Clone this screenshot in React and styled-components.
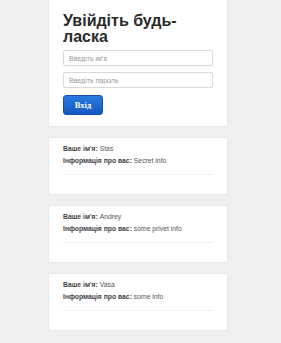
import React from 'react';
import styled, { createGlobalStyle } from 'styled-components';

const Global = createGlobalStyle`
  html, body {
    margin: 0;
    padding: 0;
    background: #efefef;
    font-family: "Liberation Sans", Arial, sans-serif;
  }
`;

const Page = styled.div`
  width: 180px;
  margin-left: 48px;
  display: flex;
  flex-direction: column;
  gap: 10px;
  padding-bottom: 12px;
`;

const Card = styled.div`
  background: #fff;
  border: 1px solid #e7e7e7;
  border-top: ${p => (p.$first ? 'none' : '1px solid #e7e7e7')};
  box-sizing: border-box;
  padding: ${p => (p.$first ? '13px 14px 11px' : '7px 14px 19px')};
`;

const Title = styled.h1`
  margin: 0 0 5px;
  font-size: 16px;
  line-height: 16px;
  font-weight: bold;
  color: #2a2a2a;
`;

const Input = styled.input`
  display: block;
  width: 150px;
  height: 16px;
  box-sizing: border-box;
  border: 1px solid #d9d9d9;
  border-radius: 2px;
  padding: 0 5px;
  margin-bottom: 6px;
  font-family: "Liberation Sans", Arial, sans-serif;
  font-size: 7px;
  color: #444;
  &::placeholder {
    color: #9a9a9a;
  }
`;

const Button = styled.button`
  margin-top: 1px;
  width: 40px;
  height: 20px;
  border: 1px solid #1351b0;
  border-radius: 3px;
  background: linear-gradient(#2a7ae0, #1458bf);
  color: #fff;
  font-family: "Liberation Serif", "Times New Roman", serif;
  font-weight: bold;
  font-size: 8.5px;
  padding: 0;
`;

const Line = styled.p`
  margin: 0 0 4px;
  font-size: 6.8px;
  line-height: 8px;
  color: #555;
  b {
    color: #444;
    font-weight: 600;
  }
`;

const Dots = styled.div`
  margin-top: 9px;
  width: 150px;
  border-top: 1px dotted #e2e2e2;
`;

const users = [
  { name: 'Stas', info: 'Secret info' },
  { name: 'Andrey', info: 'some privet info' },
  { name: 'Vasa', info: 'some info' },
];

export default function App() {
  return (
    <>
      <Global />
      <Page>
        <Card $first>
          <Title>Увійдіть будь-ласка</Title>
          <Input placeholder="Введіть ім'я" />
          <Input type="password" placeholder="Введіть пароль" />
          <Button>Вхід</Button>
        </Card>
        {users.map(u => (
          <Card key={u.name}>
            <Line><b>Ваше ім'я:</b> {u.name}</Line>
            <Line><b>Інформація про вас:</b> {u.info}</Line>
            <Dots />
          </Card>
        ))}
      </Page>
    </>
  );
}
